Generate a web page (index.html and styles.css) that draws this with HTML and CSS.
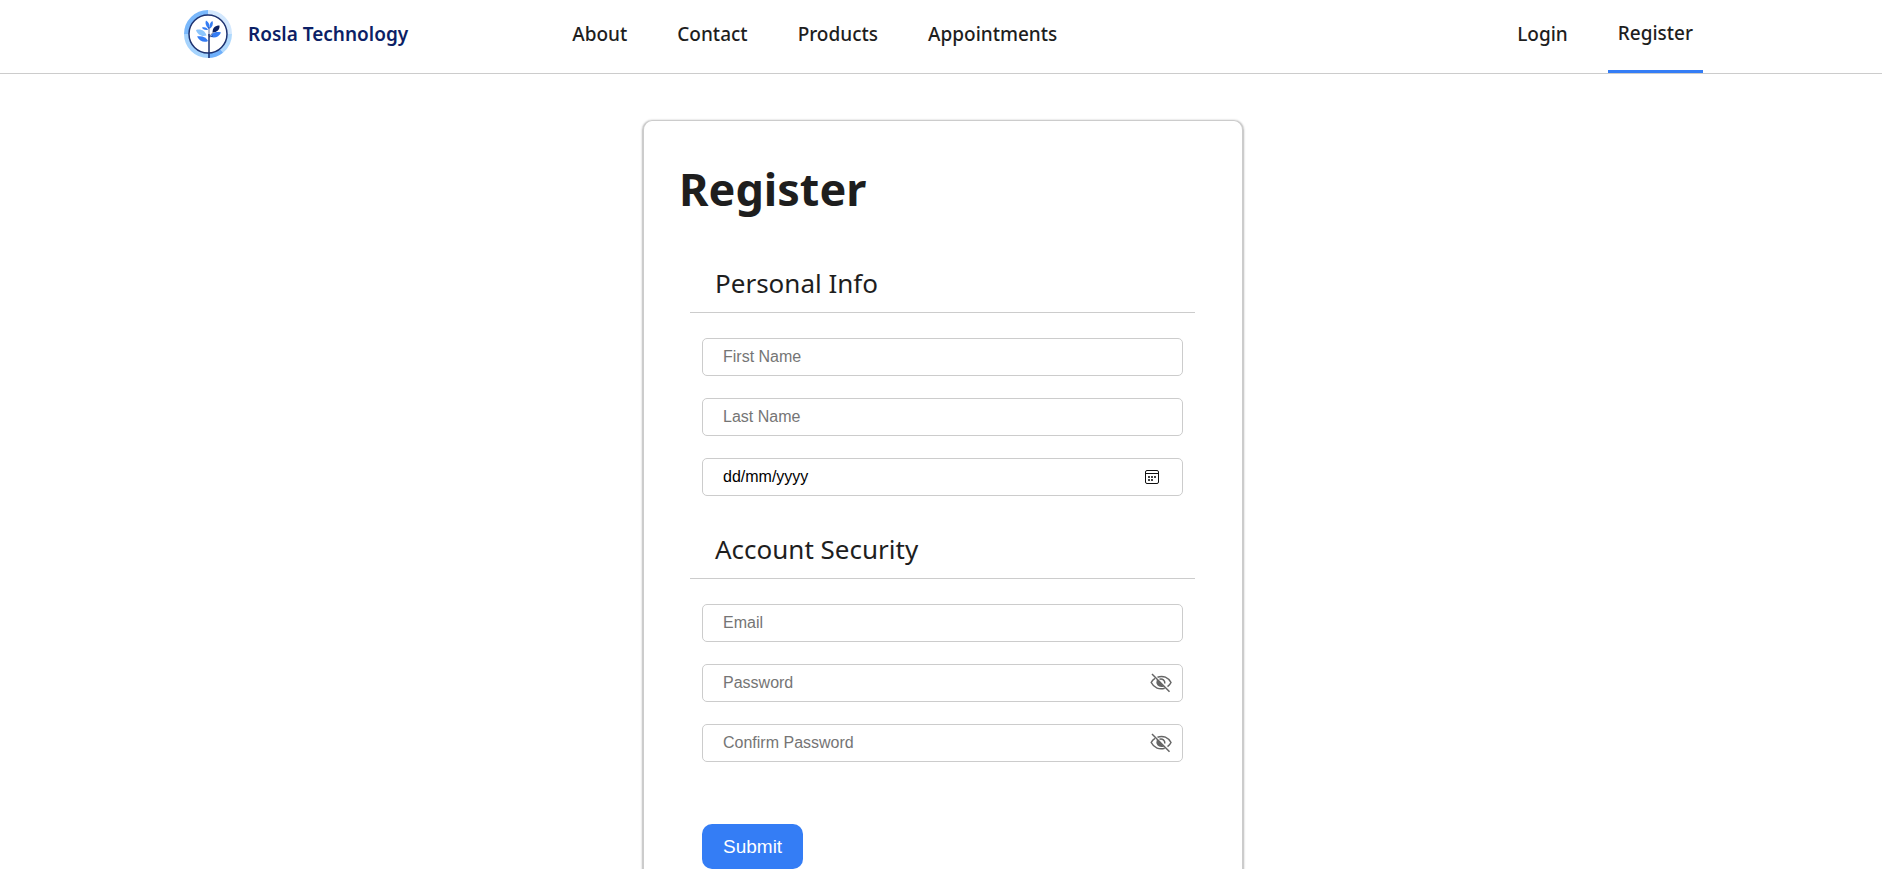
FILE: index.html
```html
<!DOCTYPE html>
<html lang="en">
<head>
<meta charset="utf-8">
<title>Register - Rosla Technology</title>
<link rel="stylesheet" href="styles.css">
</head>
<body>
<header class="header">
  <a class="brand" href="#">
    <svg class="logo" viewBox="0 0 48 48" aria-hidden="true">
      <g fill="none" stroke-width="5">
        <path d="M24 2.500A21.500 21.500 0 0 1 45.500 24" stroke="#d3e8fe"/>
        <path d="M45.500 24A21.500 21.500 0 0 1 37.500 40.700" stroke="#b0d9fd"/>
        <path d="M37.500 40.700A21.500 21.500 0 0 1 24 45.500" stroke="#6fb0fb"/>
        <path d="M24 45.500A21.500 21.500 0 0 1 2.500 24" stroke="#a5d3fd"/>
        <path d="M2.500 24A21.500 21.500 0 0 1 24 2.500" stroke="#7ab8fb"/>
      </g>
      <circle cx="24" cy="24" r="19" fill="#fff" stroke="#1d3270" stroke-width="1.500"/>
      <g fill="#357df4">
        <path d="M25 19C21.500 16 21 13 22 10.500C25 12 26 15 25 19Z"/>
        <path d="M25.500 19C25 14.500 26.500 12 28.500 11C29.500 14 28.500 17 25.500 19Z"/>
        <path d="M24 20C20.500 20.500 18.500 19 18 17.500C21 16.500 23.500 18 24 20Z"/>
        <path d="M27 27C27 23 32 21 37 22.500C35.500 26.500 31 28.500 27 27Z"/>
        <path d="M24 31C20.500 33 15.500 31.500 13 26.500C18 25.500 22.500 27.500 24 31Z"/>
      </g>
      <path d="M22.500 25.500C18 27 13.500 25 12 20C16.500 18.500 21 20.500 22.500 25.500Z" fill="#8dc6fc"/>
      <path d="M28.500 22.500C28.500 18 31 15.500 35.500 15.500C36 19.500 33 22.500 28.500 22.500Z" fill="#0c2264"/>
      <path d="M25 17V26M25 27L29 22.500M25 27L29 26" fill="none" stroke="#1d3270" stroke-width=".7"/>
      <path d="M25 24V48" stroke="#1d3270" stroke-width="1.500"/>
    </svg>
    <span>Rosla Technology</span>
  </a>
  <nav class="nav" aria-label="Main">
    <a href="#">About</a>
    <a href="#">Contact</a>
    <a href="#">Products</a>
    <a href="#">Appointments</a>
  </nav>
  <nav class="nav nav-account" aria-label="Account">
    <a href="#">Login</a>
    <a class="active" href="#" aria-current="page">Register</a>
  </nav>
</header>
<main class="main">
  <form class="card">
    <h1>Register</h1>
    <section class="group" aria-labelledby="personal">
      <h2 id="personal">Personal Info</h2>
      <div class="fields">
        <input class="field" type="text" placeholder="First Name" aria-label="First Name">
        <input class="field" type="text" placeholder="Last Name" aria-label="Last Name">
        <div class="wrap">
          <input class="field date" type="text" placeholder="dd/mm/yyyy" aria-label="Date of birth">
          <button class="icon calendar" type="button" aria-label="Open calendar">
            <svg viewBox="0 0 14 14" width="14" height="14">
              <rect x=".5" y=".5" width="13" height="13" rx="1.500" fill="none" stroke="#111"/>
              <path d="M1 3.500H13" stroke="#111"/>
              <path d="M3 6h2v2H3zM6 6h2v2H6zM9 6h2v2H9zM3 9h2v2H3zM6 9h2v2H6z" fill="#444"/>
            </svg>
          </button>
        </div>
      </div>
    </section>
    <section class="group" aria-labelledby="security">
      <h2 id="security">Account Security</h2>
      <div class="fields">
        <input class="field" type="email" placeholder="Email" aria-label="Email">
        <div class="wrap">
          <input class="field" type="password" placeholder="Password" aria-label="Password">
          <button class="icon eye" type="button" aria-label="Show password">
            <svg viewBox="0 0 22 20" width="22" height="20" fill="none" stroke="#666" stroke-width="1.500">
              <path d="M7.500 4.200C13 2 18.500 4.500 21 9.500C20.200 11.200 19 12.600 17.500 13.600"/>
              <path d="M5 5.400C3.400 6.400 2 7.800 1.200 9.500C4 15 9.500 17 14.700 15.200"/>
              <path d="M9.500 6.200C12.500 5.200 15.200 7.500 14.800 10.500"/>
              <path d="M7.400 7.600C6.200 10.600 8.500 14 12.600 13.200Z" fill="#666"/>
              <path d="M2 1L19.500 18.800"/>
            </svg>
          </button>
        </div>
        <div class="wrap">
          <input class="field" type="password" placeholder="Confirm Password" aria-label="Confirm Password">
          <button class="icon eye" type="button" aria-label="Show confirmed password">
            <svg viewBox="0 0 22 20" width="22" height="20" fill="none" stroke="#666" stroke-width="1.500">
              <path d="M7.500 4.200C13 2 18.500 4.500 21 9.500C20.200 11.200 19 12.600 17.500 13.600"/>
              <path d="M5 5.400C3.400 6.400 2 7.800 1.200 9.500C4 15 9.500 17 14.700 15.200"/>
              <path d="M9.500 6.200C12.500 5.200 15.200 7.500 14.800 10.500"/>
              <path d="M7.400 7.600C6.200 10.600 8.500 14 12.600 13.200Z" fill="#666"/>
              <path d="M2 1L19.500 18.800"/>
            </svg>
          </button>
        </div>
      </div>
    </section>
    <button class="submit" type="submit">Submit</button>
  </form>
</main>
</body>
</html>
```
FILE: styles.css
```css
* {
  box-sizing: border-box;
}

body {
  margin: 0;
  background: #fff;
  color: #1e1e1e;
  font-family: "Noto Sans", "Open Sans", sans-serif;
}

.header {
  display: flex;
  min-height: 74px;
  padding: 0 179px 0 184px;
  border-bottom: 1px solid #ccc;
}

.brand {
  display: flex;
  align-items: center;
  gap: 16px;
  padding-bottom: 5px;
  color: #0c1f66;
  font-size: 19px;
  font-weight: 600;
  text-decoration: none;
}

.logo {
  width: 48px;
  height: 48px;
}

.nav {
  display: flex;
  gap: 30px;
  margin-left: 154px;
}

.nav-account {
  margin-left: auto;
}

.nav a {
  display: flex;
  align-items: center;
  padding: 0 10px 5px;
  color: inherit;
  font-size: 19px;
  font-weight: 500;
  text-decoration: none;
}

.nav .active {
  border-bottom: 3px solid #347df5;
}

.main {
  padding: 46px 0 40px 4px;
}

.card {
  max-width: 602px;
  margin: 0 auto;
  padding: 32px 47px 80px 46px;
  border: solid #ccc;
  border-width: 1px 2px;
  border-radius: 10px;
  box-shadow: 0 0 2px rgba(0, 0, 0, 0.25);
}

h1 {
  margin: 0 -11px 41px;
  font-size: 45px;
  line-height: 72px;
}

h2 {
  margin: 0;
  padding: 0 25px 12px;
  border-bottom: 1px solid #ccc;
  font-size: 26px;
  font-weight: 400;
  line-height: 34px;
}

.group {
  margin-bottom: 36px;
}

.fields {
  display: flex;
  flex-direction: column;
  gap: 22px;
  padding: 25px 12px 0;
}

.wrap {
  position: relative;
}

.field {
  display: block;
  width: 100%;
  height: 38px;
  padding: 0 20px;
  border: 1px solid #ccc;
  border-radius: 5px;
  background: #fff;
  font: 16px "Liberation Sans", Arial, sans-serif;
}

.field::placeholder {
  color: #757575;
}

.date::placeholder {
  color: #000;
}

.icon {
  position: absolute;
  top: 0;
  bottom: 0;
  display: flex;
  align-items: center;
  padding: 0;
  border: 0;
  background: none;
}

.calendar {
  right: 24px;
}

.eye {
  right: 11px;
}

.submit {
  display: block;
  height: 45px;
  margin: 62px 12px 0;
  padding: 0 21px;
  border: 0;
  border-radius: 10px;
  background: #347df5;
  color: #fff;
  font: 19px "Liberation Sans", Arial, sans-serif;
}
```
